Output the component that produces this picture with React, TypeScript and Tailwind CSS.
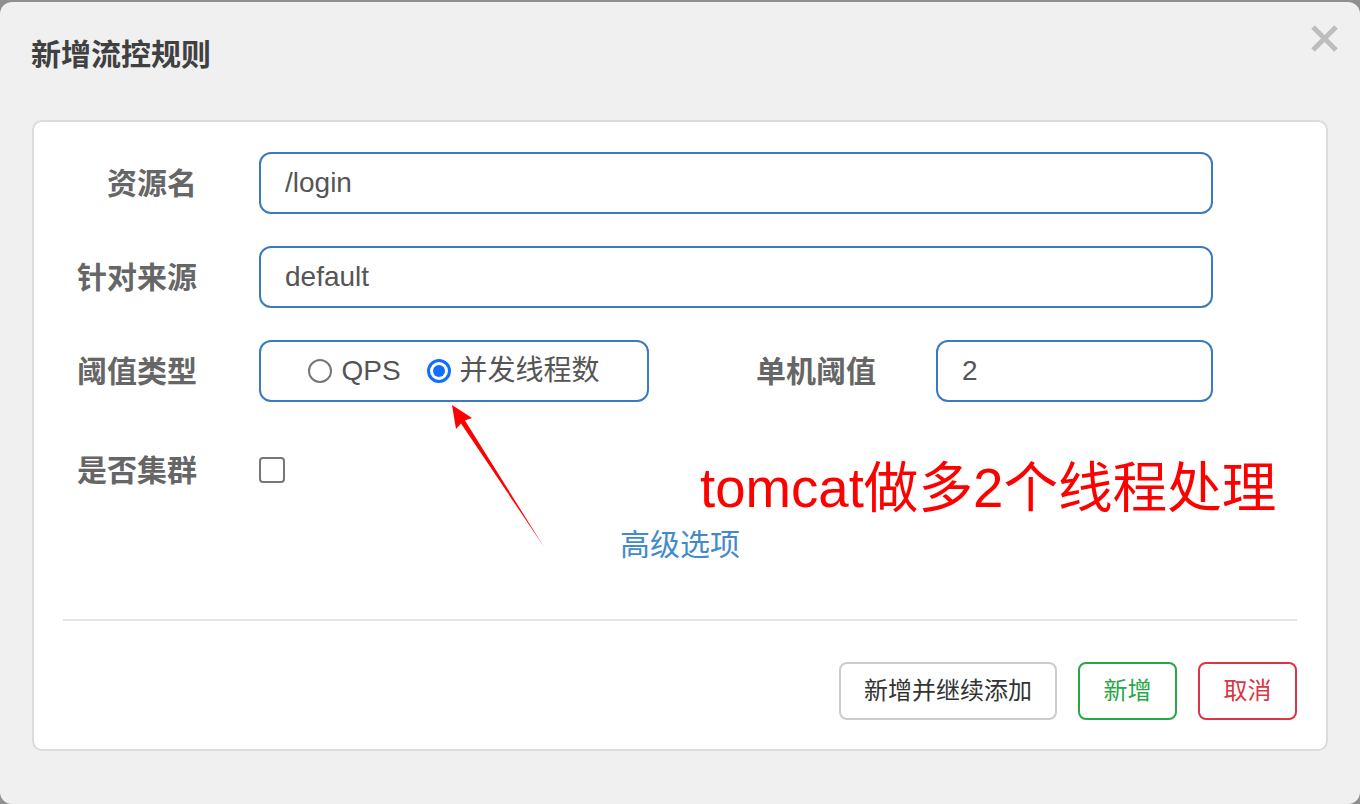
import { useState } from "react";

const font = { fontFamily: '"Liberation Sans", "Noto Sans CJK SC", sans-serif' };

function App() {
  const [grade, setGrade] = useState<"qps" | "thread">("thread");
  const [cluster, setCluster] = useState(false);

  return (
    <div className="relative min-h-screen bg-[#8f8f8f] pt-[2px]" style={font}>
      <div className="h-[802px] rounded-[12px] bg-[#f0f0f0]">
        {/* header */}
        <div className="flex items-start justify-between pl-[31px] pr-[22px] pt-[23px]">
          <h4 className="mt-[10px] text-[30px] leading-[40px] font-bold text-[#404040]">新增流控规则</h4>
          <button className="w-[27px] h-[27px]">
            <svg viewBox="0 0 27 27" className="w-[27px] h-[27px]">
              <path d="M2 2L25 25M25 2L2 25" stroke="#bdbdbd" strokeWidth="5" />
            </svg>
          </button>
        </div>

        {/* body */}
        <div className="mx-[32px] mt-[45px] rounded-[10px] border-2 border-[#dcdcdc] bg-white px-[29px] pt-[30px] pb-[29px]">
          <div className="flex h-[62px] items-center">
            <label className="w-[134px] text-right text-[30px] font-bold text-[#666]">资源名</label>
            <input
              className="ml-[62px] h-[62px] w-[954px] rounded-[12px] border-2 border-[#3a7bbf] px-[24px] text-[28px] text-[#555] outline-none"
              defaultValue="/login"
            />
          </div>
          <div className="mt-[32px] flex h-[62px] items-center">
            <label className="w-[134px] text-right text-[30px] font-bold text-[#666]">针对来源</label>
            <input
              className="ml-[62px] h-[62px] w-[954px] rounded-[12px] border-2 border-[#3a7bbf] px-[24px] text-[28px] text-[#555] outline-none"
              defaultValue="default"
            />
          </div>
          <div className="mt-[32px] flex h-[62px] items-center">
            <label className="w-[134px] text-right text-[30px] font-bold text-[#666]">阈值类型</label>
            <div className="ml-[62px] flex h-[62px] w-[390px] items-center justify-center rounded-[12px] border-2 border-[#3a7bbf] text-[28px] text-[#555]">
              <button className="flex items-center" onClick={() => setGrade("qps")}>
                {grade === "qps" ? (
                  <span className="flex h-6 w-6 items-center justify-center rounded-full border-[3px] border-[#0f6fff]">
                    <span className="h-[12px] w-[12px] rounded-full bg-[#0f6fff]" />
                  </span>
                ) : (
                  <span className="h-6 w-6 rounded-full border-2 border-[#777] bg-white" />
                )}
                <span className="ml-[9px]">QPS</span>
              </button>
              <button className="ml-[26px] flex items-center" onClick={() => setGrade("thread")}>
                {grade === "thread" ? (
                  <span className="flex h-6 w-6 items-center justify-center rounded-full border-[3px] border-[#0f6fff]">
                    <span className="h-[12px] w-[12px] rounded-full bg-[#0f6fff]" />
                  </span>
                ) : (
                  <span className="h-6 w-6 rounded-full border-2 border-[#777] bg-white" />
                )}
                <span className="ml-[9px]">并发线程数</span>
              </button>
            </div>
            <label className="w-[227px] text-right text-[30px] font-bold text-[#666]">单机阈值</label>
            <input
              className="ml-[60px] h-[62px] w-[277px] rounded-[12px] border-2 border-[#3a7bbf] px-[24px] text-[28px] text-[#555] outline-none"
              defaultValue="2"
            />
          </div>
          <div className="mt-[37px] flex h-[62px] items-center">
            <label className="w-[134px] text-right text-[30px] font-bold text-[#666]">是否集群</label>
            <button
              onClick={() => setCluster(!cluster)}
              className="ml-[62px] h-[26px] w-[26px] rounded-[4px] border-2 border-[#777] bg-white"
            />
          </div>
          <div className="mt-[24px] text-center text-[30px] leading-[40px] text-[#428bca]">高级选项</div>

          <div className="mt-[54px] h-[2px] bg-[#e5e5e5]" />

          <div className="mt-[41px] flex justify-end gap-[21px] text-[24px]">
            <button className="h-[58px] w-[218px] rounded-[8px] border-2 border-[#cccccc] text-[#333]">新增并继续添加</button>
            <button className="h-[58px] w-[99px] rounded-[8px] border-2 border-[#28a745] text-[#28a745]">新增</button>
            <button className="h-[58px] w-[99px] rounded-[8px] border-2 border-[#dc3545] text-[#dc3545]">取消</button>
          </div>
        </div>
      </div>

      {/* annotation */}
      <div className="pointer-events-none absolute left-[700px] top-[462px] text-[54.6px] leading-[54px] whitespace-nowrap text-[#ff0000]">
        tomcat做多2个线程处理
      </div>
      <svg className="pointer-events-none absolute left-0 top-0" width="1360" height="804">
        <polygon points="452,405 472,418 465,420.6 544,547 461,423.4 456,429" fill="#ff0000" />
      </svg>
    </div>
  );
}

export default App;
